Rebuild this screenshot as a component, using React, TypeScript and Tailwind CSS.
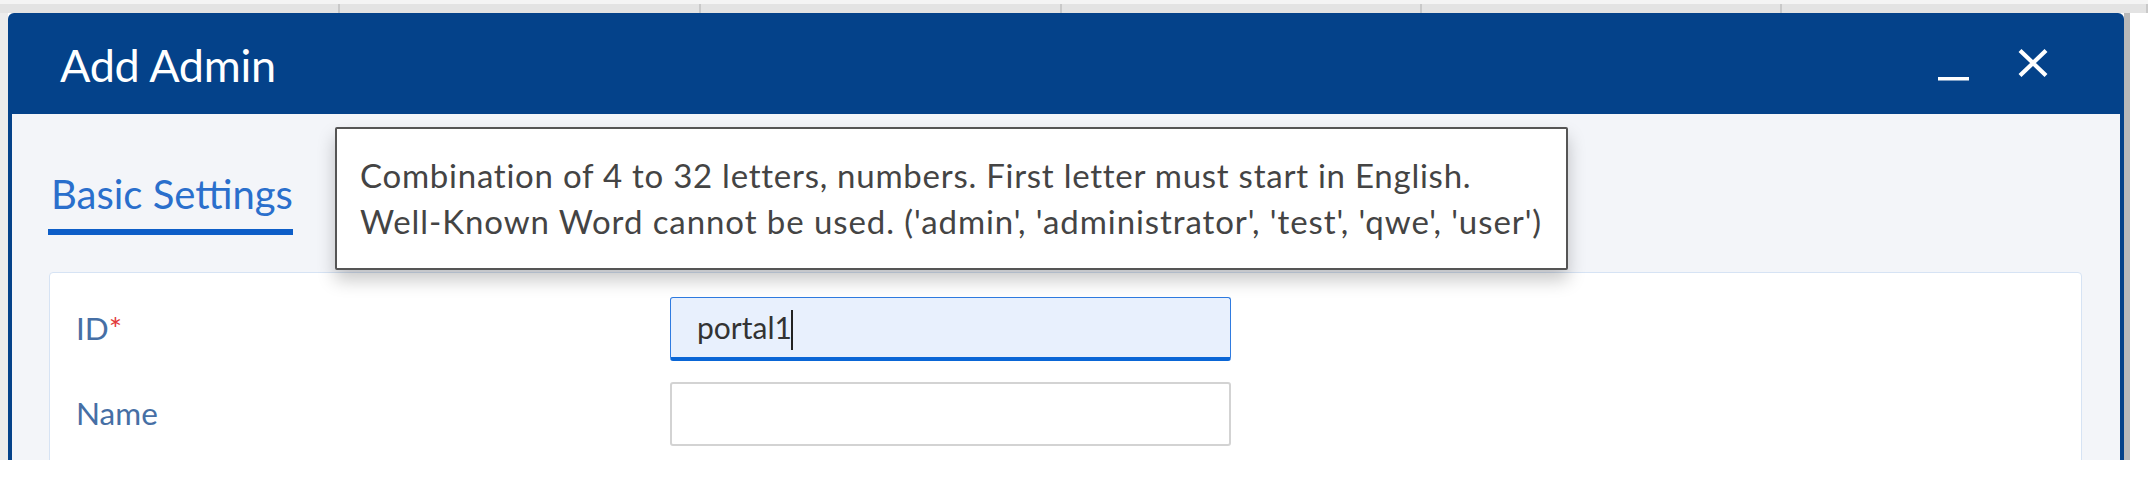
import React from 'react';

const columns = [340, 361, 361, 360, 360, 366];

const AddAdminDialog: React.FC = () => {
  return (
    <div className="relative w-[2148px] h-[502px] bg-white overflow-hidden font-['Lato',sans-serif]">
      <div className="h-[460px] flex flex-col overflow-hidden">
        {/* table header behind the dialog */}
        <div className="h-[13px] flex bg-[#e3e3e3] border-t-[4px] border-[#f4f4f4] shrink-0">
          {columns.map((w, i) => (
            <div key={i} className="h-full border-r-2 border-[#c9c9c9]" style={{ width: w }} />
          ))}
        </div>

        <div className="flex flex-1 min-h-0">
          <div className="w-[8px] bg-[#ececec]" />

          {/* Dialog */}
          <div className="w-[2116px] flex flex-col bg-[#04428a] rounded-t-[6px] px-[4px]">
            {/* Header */}
            <div className="h-[101px] shrink-0 flex items-center justify-between pl-[48px] pr-[72px] pt-[4px]">
              <h1 className="text-[45px] leading-none text-white tracking-[-0.3px]">Add Admin</h1>
              <div className="flex items-center gap-[49px]">
                <svg width="31" height="32" viewBox="0 0 31 32" className="mt-[6px]">
                  <rect x="0" y="24" width="31" height="3.5" fill="#fff" />
                </svg>
                <svg width="30" height="28" viewBox="0 0 30 28" className="-mt-[6px]">
                  <path d="M2 1.5 L28 26.5 M28 1.5 L2 26.5" stroke="#fff" strokeWidth="4.2" strokeLinecap="butt" />
                </svg>
              </div>
            </div>

            {/* Body */}
            <div className="flex-1 bg-[#f3f5f9] pl-[36px] pr-[38px] pt-[57px]">
              <div className="inline-flex flex-col">
                <span className="pl-[3px] text-[40px] leading-[47px] text-[#2a6fcc]">Basic Settings</span>
                <div className="mt-[11px] h-[6px] bg-[#0d5ec8]" />
              </div>

              <div className="mt-[37px] ml-[1px] bg-white border border-[#d6e3f4] rounded-[4px] pt-[24px] pl-[26px] h-[400px]">
                <div className="flex flex-col gap-[21px]">
                  <div className="flex items-center">
                    <label className="w-[594px] text-[31.5px] text-[#466fa5]">
                      ID<span className="text-[#e23a3a]">*</span>
                    </label>
                    <div className="w-[561px] h-[64px] flex items-center bg-[#e8f0fd] border-[1.5px] border-b-[4px] border-[#2f7be0] border-b-[#0a66d6] rounded-[3px] pl-[26px]">
                      <span className="text-[30px] text-[#333]">portal1</span>
                      <span className="w-[2px] h-[40px] bg-[#222] -ml-[1px] mt-[4px]" />
                    </div>
                  </div>
                  <div className="flex items-center">
                    <label className="w-[594px] text-[31.5px] text-[#466fa5]">Name</label>
                    <div className="w-[561px] h-[64px] bg-white border-2 border-[#d3d3d3] rounded-[3px]" />
                  </div>
                </div>
              </div>
            </div>
          </div>

          <div className="w-[6px] bg-[#b9b9b9]" />
          <div className="flex-1 bg-white" />
        </div>
      </div>

      {/* Tooltip over the dialog */}
      <div className="absolute left-[335px] top-[127px] w-[1233px] h-[143px] bg-white border-2 border-[#555] rounded-[2px] shadow-[0_10px_18px_rgba(0,0,0,0.22)] pl-[23px] pt-[23px]">
        <p className="text-[33px] leading-[46px] tracking-[0.75px] text-[#444]">
          Combination of 4 to 32 letters, numbers. First letter must start in English.
        </p>
        <p className="text-[33px] leading-[46px] tracking-[0.92px] text-[#444]">
          Well-Known Word cannot be used. ('admin', 'administrator', 'test', 'qwe', 'user')
        </p>
      </div>
    </div>
  );
};

export default AddAdminDialog;
